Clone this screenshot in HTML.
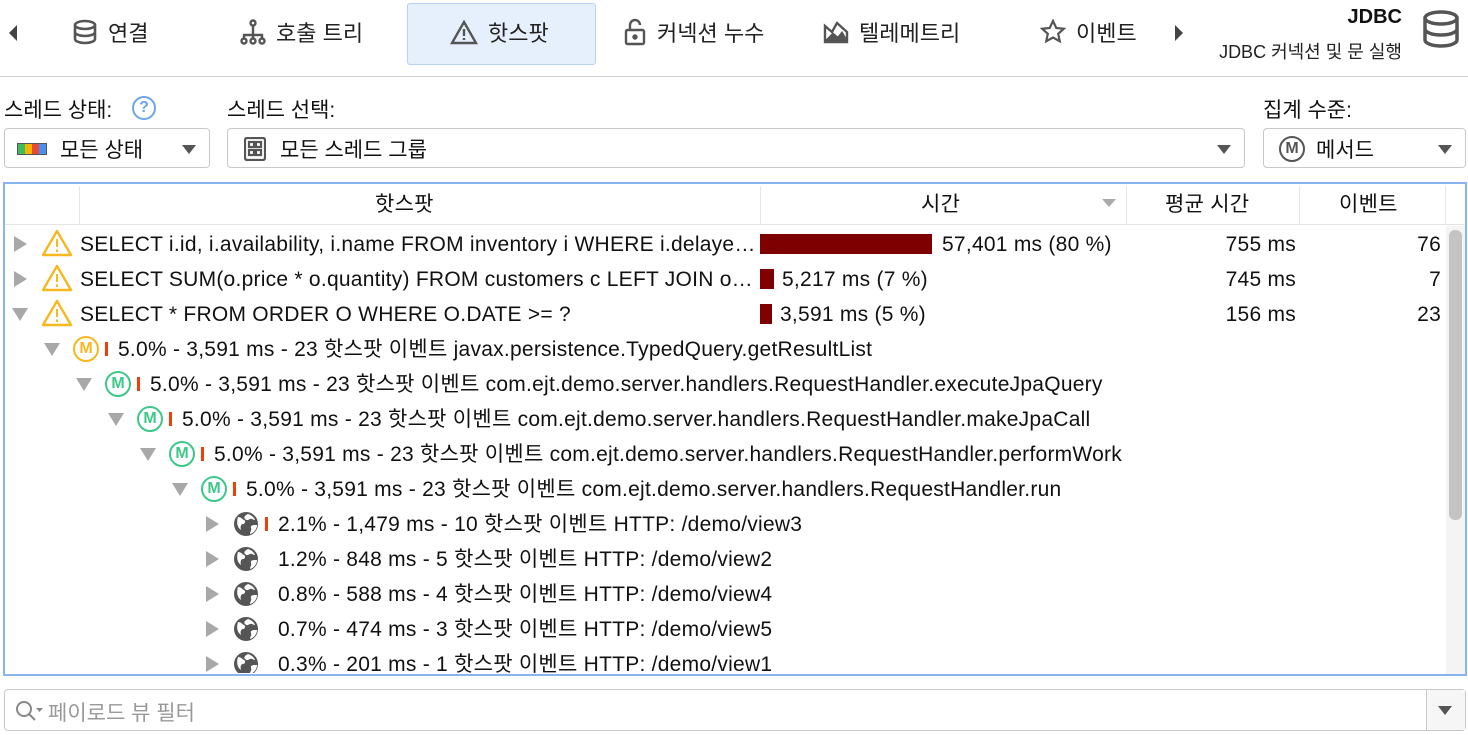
<!DOCTYPE html>
<html><head><meta charset="utf-8">
<style>
*{box-sizing:border-box;margin:0;padding:0}
body{width:1468px;height:735px;background:#fff;font-family:"Liberation Sans","Noto Sans CJK KR",sans-serif;color:#111;position:relative;overflow:hidden}
.a{position:absolute;white-space:nowrap}
.t{font-size:21px;line-height:24px;letter-spacing:0.25px}
.tab{position:absolute;top:0;height:64px;display:flex;align-items:center;font-size:22px;color:#222}
.tab svg{margin-right:10px}
.combo{position:absolute;height:40px;border:1px solid #c8c8c8;border-radius:4px;background:#fff;display:flex;align-items:center;font-size:21px}
.dd{position:absolute;width:0;height:0;border-left:7px solid transparent;border-right:7px solid transparent;border-top:9px solid #555}
.tri-r{position:absolute;width:0;height:0;border-top:8px solid transparent;border-bottom:8px solid transparent;border-left:13px solid #a8a8a8}
.tri-d{position:absolute;width:0;height:0;border-left:8px solid transparent;border-right:8px solid transparent;border-top:13px solid #a8a8a8}
.rb{position:absolute;width:3px;height:14px;background:#f0400a}
.m{position:absolute;width:26px;height:26px;border:2.5px solid #3cc88a;border-radius:50%;color:#3cc88a;font-size:16px;font-weight:bold;text-align:center;line-height:21px}
.bar{position:absolute;height:20px;background:#7e0000}
</style></head><body>

<div class="a" style="left:9px;top:25px;width:0;height:0;border-top:8px solid transparent;border-bottom:8px solid transparent;border-right:8px solid #444"></div>
<div class="tab" style="left:72px"><svg width="26" height="26" viewBox="0 0 26 26" fill="none" stroke="#555" stroke-width="2.6"><ellipse cx="13" cy="6" rx="10" ry="4"/><path d="M3 6v14c0 2.2 4.5 4 10 4s10-1.8 10-4V6M3 13c0 2.2 4.5 4 10 4s10-1.8 10-4"/></svg>연결</div>
<div class="tab" style="left:240px"><svg width="26" height="26" viewBox="0 0 26 26" fill="none" stroke="#555" stroke-width="2.4"><circle cx="13" cy="4" r="2.5"/><path d="M13 7v7M4 20v-4h18v4M13 14v6"/><circle cx="4" cy="22" r="2.5"/><circle cx="13" cy="22" r="2.5"/><circle cx="22" cy="22" r="2.5"/></svg>호출 트리</div>
<div class="a" style="left:407px;top:3px;width:189px;height:62px;background:#e6f0fc;border:1px solid #b7d3f3;border-radius:3px"></div>
<div class="tab" style="left:450px"><svg width="28" height="26" viewBox="0 0 28 26" fill="none" stroke="#555" stroke-width="2.4"><path d="M14 3L26 24H2Z"/><path d="M14 10v7M14 19v2"/></svg>핫스팟</div>
<div class="tab" style="left:623px"><svg width="24" height="28" viewBox="0 0 24 28" fill="none" stroke="#555" stroke-width="2.4"><rect x="3" y="12" width="18" height="14" rx="1.5"/><path d="M7 12V7a5 5 0 0 1 10 0"/><circle cx="12" cy="19" r="1.5" fill="#555"/></svg>커넥션 누수</div>
<div class="tab" style="left:823px"><svg width="26" height="24" viewBox="0 0 26 24" fill="none" stroke="#555" stroke-width="2.4"><path d="M2 22V6l7 6 5-9 10 9v10Z"/><path d="M2 22l8-8 5 4 4-5 5 9" fill="#555"/></svg>텔레메트리</div>
<div class="tab" style="left:1040px"><svg width="26" height="26" viewBox="0 0 26 26" fill="none" stroke="#555" stroke-width="2.2"><path d="M13 2l3.3 7 7.5.8-5.6 5 1.6 7.4L13 18.5l-6.8 3.7 1.6-7.4-5.6-5 7.5-.8Z"/></svg>이벤트</div>
<div class="a" style="left:1175px;top:25px;width:0;height:0;border-top:8px solid transparent;border-bottom:8px solid transparent;border-left:8px solid #444"></div>
<div class="a" style="right:66px;top:6px;font-size:20px;font-weight:bold">JDBC</div>
<div class="a" style="right:66px;top:38px;font-size:18px;color:#222">JDBC 커넥션 및 문 실행</div>
<svg class="a" style="left:1422px;top:10px" width="38" height="38" viewBox="0 0 38 38" fill="none" stroke="#555" stroke-width="3.5"><ellipse cx="19" cy="8" rx="16" ry="6"/><path d="M3 8v22c0 3.3 7.2 6 16 6s16-2.7 16-6V8M3 19c0 3.3 7.2 6 16 6s16-2.7 16-6"/></svg>
<div class="a" style="left:0;top:76px;width:1468px;height:1px;background:#d0d0d0"></div>

<div class="a" style="left:4px;top:94px;font-size:21px">스레드 상태:</div>
<div class="a" style="left:132px;top:96px;width:24px;height:24px;border:2px solid #6aa6ea;border-radius:50%;color:#6aa6ea;font-size:16px;text-align:center;line-height:20px;font-weight:bold">?</div>
<div class="a" style="left:227px;top:94px;font-size:21px">스레드 선택:</div>
<div class="a" style="left:1263px;top:94px;font-size:21px">집계 수준:</div>

<div class="combo" style="left:4px;top:128px;width:206px">
 <div class="a" style="left:12px;top:14px;width:30px;height:12px;display:flex;border:1px solid #555"><i style="flex:1;background:#3fbd5c"></i><i style="flex:1;background:#f5b400"></i><i style="flex:1;background:#e84a3a"></i><i style="flex:1;background:#4a8ef0"></i></div>
 <span class="a" style="left:55px;top:5px">모든 상태</span><div class="dd" style="left:177px;top:16px"></div></div>
<div class="combo" style="left:227px;top:128px;width:1018px">
 <svg class="a" style="left:16px;top:8px" width="22" height="24" viewBox="0 0 22 24" fill="none" stroke="#555" stroke-width="2.2"><rect x="1" y="1" width="20" height="22" rx="2"/><rect x="5" y="5" width="5" height="5"/><rect x="12" y="5" width="5" height="5"/><rect x="5" y="13" width="5" height="5"/><rect x="12" y="13" width="5" height="5"/></svg>
 <span class="a" style="left:52px;top:5px">모든 스레드 그룹</span><div class="dd" style="left:989px;top:16px"></div></div>
<div class="combo" style="left:1263px;top:128px;width:203px">
 <div class="a" style="left:15px;top:7px;width:26px;height:26px;border:2.5px solid #555;border-radius:50%;font-size:16px;font-weight:bold;color:#555;text-align:center;line-height:21px">M</div>
 <span class="a" style="left:52px;top:5px">메서드</span><div class="dd" style="left:174px;top:16px"></div></div>

<div class="a" style="left:3px;top:182px;width:1464px;height:494px;border:2.5px solid #8ab4f0;overflow:hidden;background:#fff">
 <div class="a" style="left:0;top:0;width:1460px;height:41px;border-bottom:1px solid #e4e4e4"></div>
 <div class="a" style="left:74px;top:2px;width:1px;height:38px;background:#e6e6e6"></div>
 <div class="a" style="left:755px;top:2px;width:1px;height:38px;background:#e6e6e6"></div>
 <div class="a" style="left:1121px;top:2px;width:1px;height:38px;background:#e6e6e6"></div>
 <div class="a" style="left:1294px;top:2px;width:1px;height:38px;background:#e6e6e6"></div>
 <div class="a" style="left:1440px;top:2px;width:1px;height:38px;background:#e6e6e6"></div>
 <div class="a t" style="left:370px;top:9px">핫스팟</div>
 <div class="a t" style="left:916px;top:9px">시간</div>
 <div class="a" style="left:1097px;top:15px;width:0;height:0;border-left:7px solid transparent;border-right:7px solid transparent;border-top:8px solid #aaa"></div>
 <div class="a t" style="left:1160px;top:9px">평균 시간</div>
 <div class="a t" style="left:1334px;top:9px">이벤트</div>
 <div class="a" style="left:1441px;top:42px;width:19px;height:450px;background:#f4f4f4"></div>
 <div class="a" style="left:1444px;top:46px;width:13px;height:290px;background:#c4c4c4;border-radius:6px"></div>
</div>

<div id="rows"></div>

<div class="a" style="left:4px;top:689px;width:1462px;height:42px;border:1px solid #c8c8c8;border-radius:4px"></div>
<div class="a" style="left:1426px;top:690px;width:1px;height:40px;background:#c8c8c8"></div>
<div class="a" style="left:1427px;top:690px;width:38px;height:40px;background:#f6f6f6"></div>
<div class="dd" style="left:1438px;top:706px"></div>
<svg class="a" style="left:14px;top:699px" width="32" height="24" viewBox="0 0 32 24" fill="none" stroke="#888" stroke-width="2"><circle cx="10" cy="10" r="7"/><path d="M15 15l6 6"/><path d="M22 9h7l-3.5 4z" fill="#888" stroke="none"/></svg>
<div class="a" style="left:48px;top:697px;font-size:21px;color:#999">페이로드 뷰 필터</div>

<script>
const W='<svg width="32" height="28" viewBox="0 0 32 28"><path d="M16 2L30 26H2Z" fill="#fff" stroke="#f6b81e" stroke-width="2.4" stroke-linejoin="round"/><path d="M16 10v8M16 20.5v2.5" stroke="#f6b81e" stroke-width="2"/></svg>';
const G='<svg width="26" height="26" viewBox="0 0 26 26"><circle cx="13" cy="13" r="12" fill="#555"/><path d="M5 6c3 0 4 2 6 3s1 4-1 4-3 3-2 6c-3-2-5-6-3-13zM15 3c3 1 6 3 7 6-2 0-3-2-5-1s-3 2-5 0 1-4 3-5zM24 14c0 4-3 8-7 9 0-3 2-3 1-6s3-3 6-3z" fill="#fff"/></svg>';
let h='';
function row(i,lvl,open,icon,bar,text,extra){
 const cy=244+i*35, top=cy-11;
 const tx=20+32*lvl;
 h+= open?`<div class="tri-d" style="left:${tx-8}px;top:${cy-6}px"></div>`:`<div class="tri-r" style="left:${tx-6}px;top:${cy-8}px"></div>`;
 let ic, txt;
 if(lvl==0){ic=57;txt=80;}else{ic=tx+34;txt=ic+32;}
 if(icon=='W') h+=`<div class="a" style="left:${ic-16}px;top:${cy-15}px">${W}</div>`;
 else if(icon=='G') h+=`<div class="a" style="left:${ic-13}px;top:${cy-13}px">${G}</div>`;
 else h+=`<div class="m" style="left:${ic-13}px;top:${cy-13}px;${icon=='Y'?'border-color:#f6b81e;color:#f6b81e':''}">M</div>`;
 if(bar) h+=`<div class="rb" style="left:${ic+19}px;top:${cy-7}px"></div>`;
 h+=`<div class="a t" style="left:${txt}px;top:${top}px;${lvl==0?'width:677px;overflow:hidden;text-overflow:ellipsis':''}">${text}</div>`;
 if(extra)h+=extra(cy,top);
}
function cols(w,t,avg,ev){return (cy,top)=>`<div class="bar" style="left:760px;top:${cy-10}px;width:${w}px"></div><div class="a t" style="left:${760+w+(w>50?10:8)}px;top:${top}px">${t}</div><div class="a t" style="right:172px;top:${top}px">${avg}</div><div class="a t" style="right:27px;top:${top}px">${ev}</div>`;}
row(0,0,0,'W',0,'SELECT i.id, i.availability, i.name FROM inventory i WHERE i.delayed = ? AND i.id',cols(172,'57,401 ms (80 %)','755 ms','76'));
row(1,0,0,'W',0,'SELECT SUM(o.price * o.quantity) FROM customers c LEFT JOIN orders o',cols(14,'5,217 ms (7 %)','745 ms','7'));
row(2,0,1,'W',0,'SELECT * FROM ORDER O WHERE O.DATE &gt;= ?',cols(12,'3,591 ms (5 %)','156 ms','23'));
const p='5.0% - 3,591 ms - 23 핫스팟 이벤트 ';
row(3,1,1,'Y',1,p+'javax.persistence.TypedQuery.getResultList');
row(4,2,1,'M',1,p+'com.ejt.demo.server.handlers.RequestHandler.executeJpaQuery');
row(5,3,1,'M',1,p+'com.ejt.demo.server.handlers.RequestHandler.makeJpaCall');
row(6,4,1,'M',1,p+'com.ejt.demo.server.handlers.RequestHandler.performWork');
row(7,5,1,'M',1,p+'com.ejt.demo.server.handlers.RequestHandler.run');
row(8,6,0,'G',1,'2.1% - 1,479 ms - 10 핫스팟 이벤트 HTTP: /demo/view3');
row(9,6,0,'G',0,'1.2% - 848 ms - 5 핫스팟 이벤트 HTTP: /demo/view2');
row(10,6,0,'G',0,'0.8% - 588 ms - 4 핫스팟 이벤트 HTTP: /demo/view4');
row(11,6,0,'G',0,'0.7% - 474 ms - 3 핫스팟 이벤트 HTTP: /demo/view5');
row(12,6,0,'G',0,'0.3% - 201 ms - 1 핫스팟 이벤트 HTTP: /demo/view1');
document.getElementById('rows').outerHTML='<div class="a" style="left:6px;top:228px;width:1436px;height:445px;overflow:hidden"><div class="a" style="left:-6px;top:-228px;width:1468px;height:735px">'+h+'</div></div>';
</script>
</body></html>
